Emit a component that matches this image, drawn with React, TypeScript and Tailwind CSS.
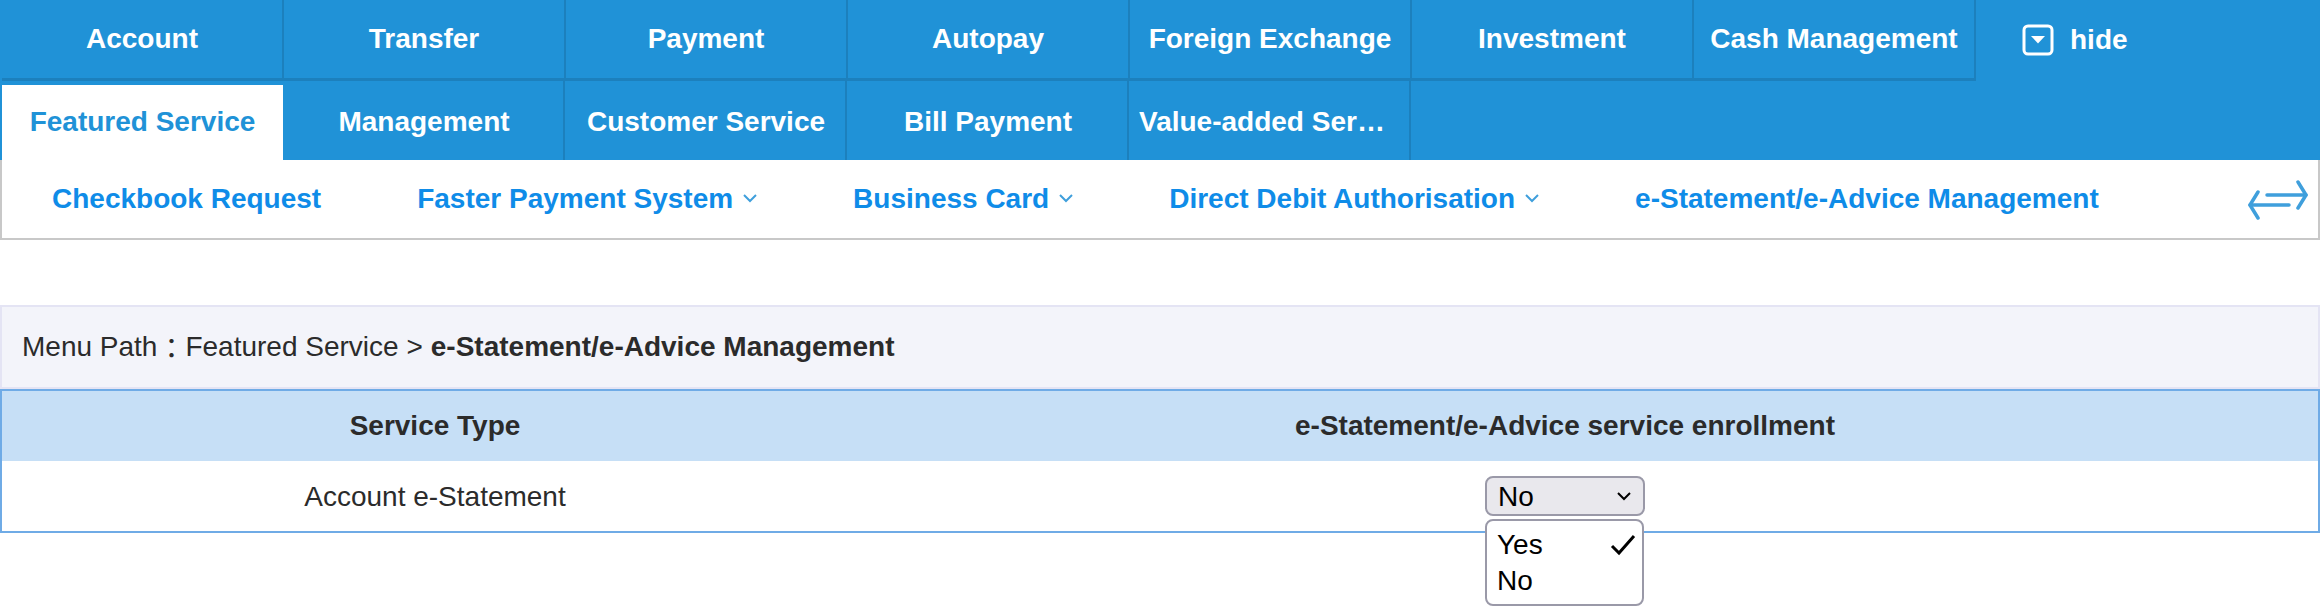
import React from 'react';

const mainTabs = ['Account', 'Transfer', 'Payment', 'Autopay', 'Foreign Exchange', 'Investment', 'Cash Management'];
const subTabs = ['Management', 'Customer Service', 'Bill Payment'];
const links = [
  { label: 'Checkbook Request', more: false },
  { label: 'Faster Payment System', more: true },
  { label: 'Business Card', more: true },
  { label: 'Direct Debit Authorisation', more: true },
  { label: 'e-Statement/e-Advice Management', more: false },
];

function HideIcon() {
  return (
    <svg width="32" height="32" viewBox="0 0 32 32" fill="none">
      <rect x="2" y="2" width="28" height="28" rx="4" stroke="#fff" strokeWidth="3" />
      <path d="M9 12h14l-7 7.5z" fill="#fff" />
    </svg>
  );
}

function SwapIcon() {
  return (
    <svg width="62" height="40" viewBox="0 0 62 40" fill="none" stroke="#3f9fdc" strokeWidth="3.5" strokeLinecap="round" strokeLinejoin="round" className="mt-[2px]">
      <path d="M20 15h39" />
      <path d="M51 2l8 13-8 13" />
      <path d="M42 25H3" />
      <path d="M11 12L3 25l8 13" />
    </svg>
  );
}

function Chevron({ className }: { className: string }) {
  return (
    <svg width="14" height="10" viewBox="0 0 14 10" fill="none" className={className}>
      <path d="M1 2l6 6 6-6" stroke="currentColor" strokeWidth="2" />
    </svg>
  );
}

export default function App() {
  return (
    <div className="h-[612px] w-[2320px] overflow-hidden bg-white font-['Liberation_Sans',Arial,sans-serif] text-[#2b2b2b]">
      <div className="h-[160px] bg-[#2092d7] text-[28px] font-bold text-white">
        <div className="flex h-[81px] pl-[2px]">
          {mainTabs.map((t) => (
            <div key={t} className="flex w-[282px] items-center justify-center border-r-2 border-b-[3px] border-[#1c80bd] whitespace-nowrap">
              {t}
            </div>
          ))}
          <div className="ml-[46px] flex items-center gap-[16px] pb-[2px]">
            <HideIcon />
            <span>hide</span>
          </div>
        </div>
        <div className="flex h-[79px] pl-[2px]">
          <div className="mt-[4px] flex w-[281px] items-center justify-center bg-white pb-[1px] text-[#2092d7]">
            Featured Service
          </div>
          {subTabs.map((t) => (
            <div key={t} className="flex w-[282px] items-center justify-center border-r-2 border-[#1c80bd] pt-[2px] pl-[2px] first:ml-px">
              {t}
            </div>
          ))}
          {/* this one is cut off by the cell width in the real page */}
          <div className="flex w-[282px] items-center border-r-2 border-[#1c80bd] pt-[2px] pr-[14px] pl-[10px]">
            <span className="truncate">Value-added Services</span>
          </div>
        </div>
      </div>

      <div className="flex h-[80px] items-center justify-between border-x-2 border-b-2 border-[#c8c8c8] pr-[9px] text-[28px] font-bold text-[#0f8ce8]">
        <div className="flex items-center">
          {links.map((l) => (
            <div key={l.label} className="flex items-center gap-[10px] px-[48px] whitespace-nowrap first:pl-[50px]">
              {l.label}
              {l.more && <Chevron className="mt-[-2px] text-[#3f9fdc]" />}
            </div>
          ))}
        </div>
        <SwapIcon />
      </div>

      <div className="mt-[65px] flex h-[84px] items-center border-2 border-[#e4e4f4] bg-[#f3f4fa] pl-[20px] text-[28px]">
        <span className="font-['Liberation_Sans','Noto_Sans_CJK_TC',sans-serif]">
          Menu Path<span className="inline-block translate-y-[3px]">：</span>Featured Service &gt;
        </span>
        <span className="ml-[8px] font-bold">e-Statement/e-Advice Management</span>
      </div>

      <div className="relative border-2 border-[#6fabe6]">
        <div className="grid h-[70px] grid-cols-[866px_1394px] items-center bg-[#c6dff6] text-[28px] font-bold">
          <div className="text-center">Service Type</div>
          <div className="text-center">e-Statement/e-Advice service enrollment</div>
        </div>
        <div className="grid h-[70px] grid-cols-[866px_1394px] items-center text-[28px]">
          <div className="pt-[2px] text-center">Account e-Statement</div>
          <div className="flex justify-center">
            <div className="relative h-[40px] w-[160px]">
              <div className="flex h-[40px] items-center justify-between rounded-[8px] border-2 border-[#9a99a8] bg-[#e9e8ed] pr-[12px] pl-[11px] text-black">
                <span className="pt-[2px]">No</span>
                <Chevron className="text-black" />
              </div>
              <div className="absolute top-[43px] left-0 h-[87px] w-[159px] rounded-[8px] border-2 border-[#9a99a8] bg-white pt-[6px] pl-[10px] leading-[36px] text-black">
                <div className="flex items-center justify-between pr-[6px]">
                  Yes
                  <svg width="26" height="22" viewBox="0 0 26 22" fill="none">
                    <path d="M2 12l7 7L24 2" stroke="#000" strokeWidth="3" />
                  </svg>
                </div>
                <div>No</div>
              </div>
            </div>
          </div>
        </div>
      </div>
    </div>
  );
}
